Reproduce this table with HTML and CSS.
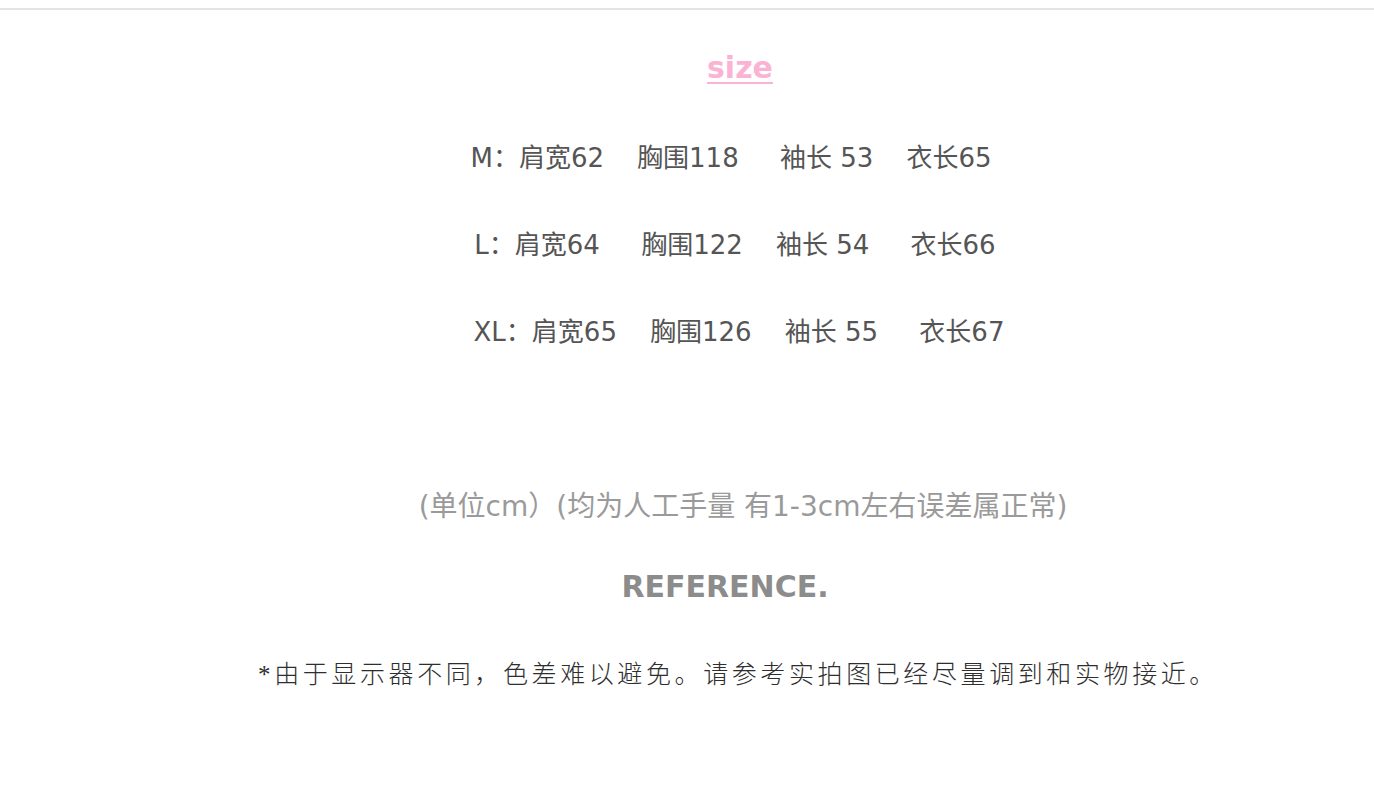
FILE: index.html
```html
<!DOCTYPE html>
<html lang="zh-CN">
<head>
<meta charset="utf-8">
<title>size</title>
<link rel="stylesheet" href="styles.css">
</head>
<body>
<div class="topline"></div>
<main class="content">
  <h2 class="size-title">size</h2>
  <p class="row row-m">M：肩宽62&nbsp;&nbsp;&nbsp;&nbsp;胸围118&nbsp;&nbsp;&nbsp;&nbsp;&nbsp;袖长 53&nbsp;&nbsp;&nbsp;&nbsp;衣长65</p>
  <p class="row row-l">L：肩宽64&nbsp;&nbsp;&nbsp;&nbsp;&nbsp;胸围122&nbsp;&nbsp;&nbsp;&nbsp;袖长 54&nbsp;&nbsp;&nbsp;&nbsp;&nbsp;衣长66</p>
  <p class="row row-xl">XL：肩宽65&nbsp;&nbsp;&nbsp;&nbsp;胸围126&nbsp;&nbsp;&nbsp;&nbsp;袖长 55&nbsp;&nbsp;&nbsp;&nbsp;&nbsp;衣长67</p>
  <p class="note">(单位cm）(均为人工手量 有1-3cm左右误差属正常)</p>
  <p class="reference">REFERENCE.</p>
  <p class="disclaimer">*由于显示器不同，色差难以避免。请参考实拍图已经尽量调到和实物接近。</p>
</main>
</body>
</html>
```

FILE: styles.css
```css
html, body {
  margin: 0;
  padding: 0;
  background: #ffffff;
}

body {
  font-family: "DejaVu Sans", "Noto Sans CJK SC", sans-serif;
}

.topline {
  margin-top: 8px;
  height: 2px;
  background: #e4e4e4;
}

.content {
  padding-left: 96px;
  text-align: center;
}

.content p,
.content h2 {
  margin: 0;
}

.size-title {
  margin-top: 38px !important;
  font-size: 30px;
  line-height: 40px;
  font-weight: bold;
  color: #fbb3d4;
  text-decoration: underline;
  text-decoration-thickness: 2px;
  text-underline-offset: 4px;
  padding-left: 10px;
}

.row {
  font-size: 26px;
  line-height: 40px;
  color: #555555;
  white-space: pre;
}

.row-m {
  margin-top: 50px !important;
  padding-right: 8px;
}

.row-l {
  margin-top: 47px !important;
}

.row-xl {
  margin-top: 47px !important;
  padding-left: 8px;
}

.note {
  margin-top: 135px !important;
  font-size: 28px;
  line-height: 40px;
  color: #9a9a9a;
  padding-left: 16px;
}

.reference {
  margin-top: 40px !important;
  font-size: 30px;
  line-height: 40px;
  font-weight: bold;
  color: #8c8c8c;
  padding-right: 20px;
}

.disclaimer {
  margin-top: 48px !important;
  font-family: "Liberation Serif", "Noto Sans CJK SC", serif;
  font-size: 25px;
  line-height: 40px;
  color: #2e2e2e;
  letter-spacing: 3.6px;
  font-weight: 300;
  padding-left: 6px;
}
```
